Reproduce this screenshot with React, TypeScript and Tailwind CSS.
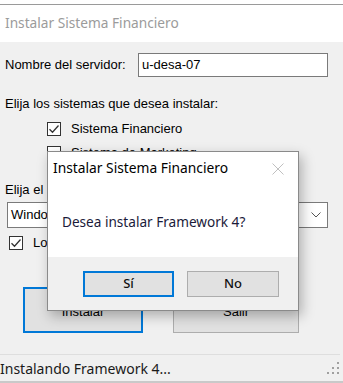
import React from "react";

const ui = { fontFamily: '"Liberation Sans", Arial, sans-serif' };
const seg = { fontFamily: '"Noto Sans", "Open Sans", sans-serif' };

function Check({ checked }: { checked?: boolean }) {
  return (
    <div className="w-[14px] h-[14px] border border-[#333333] bg-white flex items-center justify-center shrink-0">
      {checked && (
        <svg width="12" height="12" viewBox="0 0 12 12">
          <path d="M1.5 6.2 L4.5 9.2 L10.5 2.5" fill="none" stroke="#333333" strokeWidth="1.3" />
        </svg>
      )}
    </div>
  );
}

export default function App() {
  return (
    <div className="relative w-[343px] h-[383px] bg-white overflow-hidden text-black" style={ui}>
      <div className="h-[4px] bg-white" />
      <div className="h-[1px] bg-[#9a9a9a]" />
      {/* title bar */}
      <div className="h-[37px] bg-white flex items-center pl-[5px] text-[13.7px] text-[#9b9b9b]" style={seg}>
        Instalar Sistema Financiero
      </div>
      {/* body */}
      <div className="h-[312px] bg-[#f0f0f0] text-[13px] flex flex-col">
        <div className="flex items-center mt-[11px] h-[24px]">
          <span className="pl-[5px] w-[138px]">Nombre del servidor:</span>
          <div className="w-[190px] h-[24px] border border-[#7a7a7a] bg-white flex items-center pl-[3px]">u-desa-07</div>
        </div>
        <div className="mt-[19px] h-[16px] leading-[16px] pl-[5px]">Elija los sistemas que desea instalar:</div>
        <div className="mt-[10px] flex flex-col gap-[10px] pl-[47px]">
          <div className="flex items-center h-[14px] gap-[10px]">
            <Check checked />
            <span>Sistema Financiero</span>
          </div>
          <div className="flex items-center h-[14px] gap-[10px]">
            <Check />
            <span>Sistema de Marketing</span>
          </div>
        </div>
        <div className="mt-[22px] h-[16px] leading-[16px] pl-[5px]">Elija el Sistema Operativo:</div>
        <div className="ml-[7px] mt-[4px] w-[321px] h-[26px] border border-[#7a7a7a] bg-white flex items-center justify-between pl-[3px] pr-[6px]">
          <span>Windows 10</span>
          <svg width="10" height="6" viewBox="0 0 10 6">
            <path d="M0.5 0.5 L5 5 L9.5 0.5" fill="none" stroke="#555" strokeWidth="1" />
          </svg>
        </div>
        <div className="mt-[8px] flex items-center gap-[10px] pl-[9px] h-[14px]">
          <Check checked />
          <span>Log de instalación</span>
        </div>
        <div className="mt-[37px] flex">
          <div className="ml-[23px] w-[120px] h-[46px] border-2 border-[#0078d7] bg-[#e1e1e1] flex items-center justify-center pt-[4px]">Instalar</div>
          <div className="ml-[30px] w-[126px] h-[46px] border border-[#adadad] bg-[#e1e1e1] flex items-center justify-center pt-[4px]">Salir</div>
        </div>
      </div>
      {/* separator + status */}
      <div className="h-[1px] bg-[#f0f0f0]">
        <div className="w-[340px] h-[1px] bg-[#dedede]" />
      </div>
      <div className="h-[26px] bg-[#f0f0f0] flex items-center justify-between text-[14px] text-[#1a1a1a]" style={seg}>
        <span>Instalando Framework 4...</span>
        <svg width="14" height="14" viewBox="0 0 14 14" className="mr-[3px]">
          {[
            [10, 1],
            [10, 6],
            [5, 6],
            [10, 11],
            [5, 11],
            [0, 11],
          ].map(([x, y], i) => (
            <rect key={i} x={x + 1} y={y} width="2" height="2" fill="#a0a0a0" />
          ))}
        </svg>
      </div>
      <div className="h-[2px] bg-[#c9c9c9]" />

      {/* modal dialog */}
      <div
        className="absolute left-[47px] top-[151px] w-[252px] h-[160px] border border-[#8a8a8a] bg-white flex flex-col shadow-[3px_5px_12px_rgba(0,0,0,0.28)]"
        style={seg}
      >
        <div className="h-[33px] flex items-center justify-between pl-[5px] pr-[14px] text-[13.8px] text-black">
          <span>Instalar Sistema Financiero</span>
          <svg width="12" height="12" viewBox="0 0 12 12">
            <path d="M0.5 0.5 L11.5 11.5 M11.5 0.5 L0.5 11.5" stroke="#c0c0c0" strokeWidth="1" />
          </svg>
        </div>
        <div className="h-[72px] pl-[14px] pt-[28px] text-[13.6px] leading-[18px] text-[#1b1b3a]">Desea instalar Framework 4?</div>
        <div className="flex-1 bg-[#f0f0f0] flex items-start pt-[14px] text-[13px] text-[#111] font-medium">
          <div className="ml-[35px] w-[91px] h-[26px] border-2 border-[#0078d7] bg-[#e1e1e1] flex items-center justify-center">Sí</div>
          <div className="ml-[13px] w-[92px] h-[26px] border border-[#adadad] bg-[#e1e1e1] flex items-center justify-center">No</div>
        </div>
      </div>
    </div>
  );
}
